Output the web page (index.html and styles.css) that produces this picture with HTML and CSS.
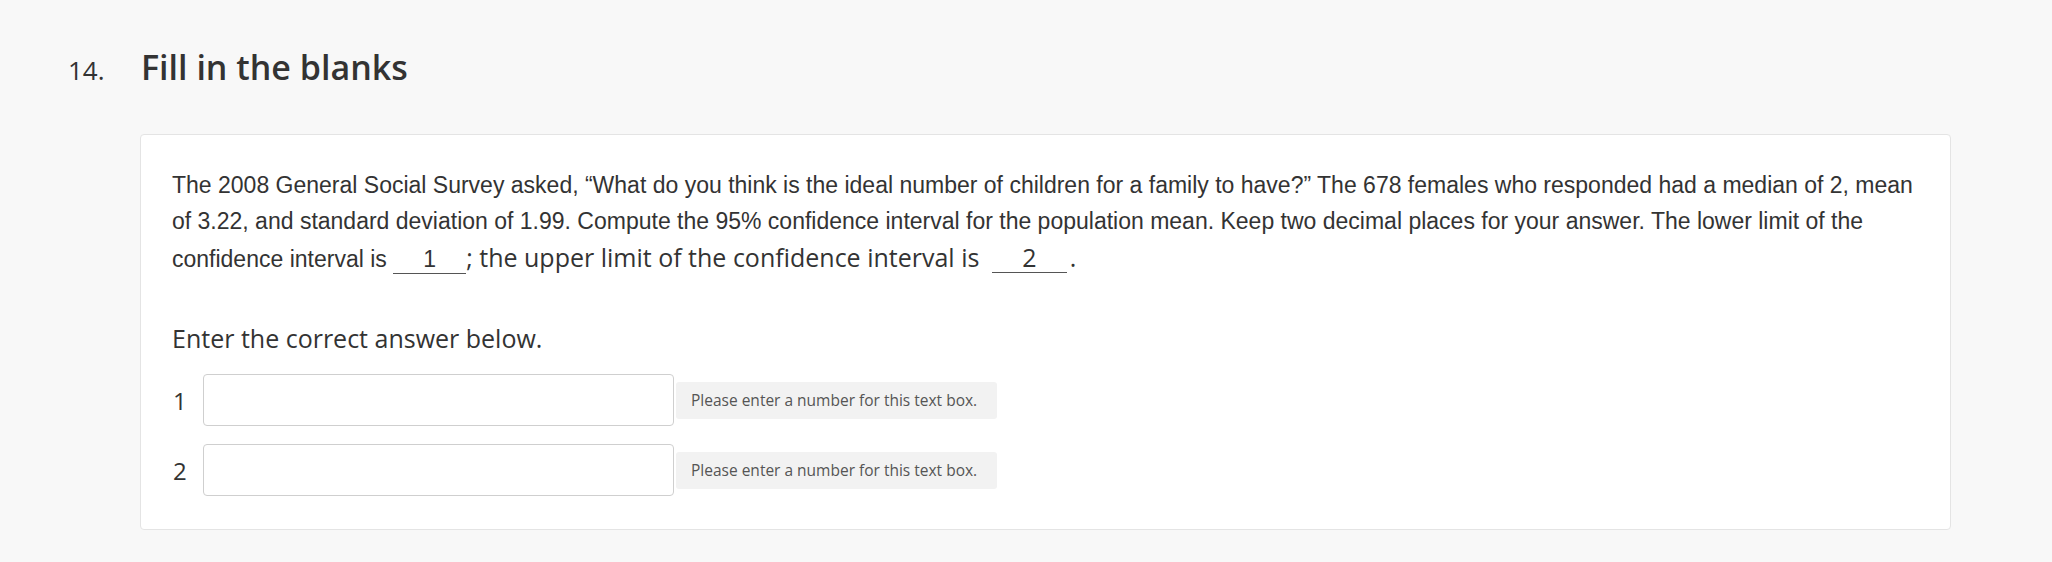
FILE: index.html
```html
<!DOCTYPE html>
<html lang="en">
<head>
<meta charset="utf-8">
<title>Fill in the blanks</title>
<link rel="stylesheet" href="styles.css">
</head>
<body>
<div class="page">
  <div class="q-header">
    <span class="q-num">14.</span>
    <h1 class="q-title">Fill in the blanks</h1>
  </div>
  <div class="card">
    <p class="stem">The 2008 General Social Survey asked, “What do you think is the ideal number of children for a family to have?” The 678 females who responded had a median of 2, mean of 3.22, and standard deviation of 1.99. Compute the 95% confidence interval for the population mean. Keep two decimal places for your answer. The lower limit of the confidence interval is <span class="blank">1</span><span class="os">; the upper limit of the confidence interval is <span class="blank blank-os">2</span>.</span></p>
    <p class="prompt">Enter the correct answer below.</p>
    <div class="answers">
      <div class="answer-row">
        <span class="ans-label">1</span>
        <input class="ans-input" type="text">
        <span class="hint">Please enter a number for this text box.</span>
      </div>
      <div class="answer-row">
        <span class="ans-label">2</span>
        <input class="ans-input" type="text">
        <span class="hint">Please enter a number for this text box.</span>
      </div>
    </div>
  </div>
</div>
</body>
</html>
```
FILE: styles.css
```css
html, body {
  margin: 0;
  padding: 0;
  background: #f8f8f8;
}
body {
  font-family: "Open Sans", "Liberation Sans", sans-serif;
  color: #333;
}
.page {
  padding: 47px 0 0 68px;
}
.q-header {
  display: flex;
  align-items: baseline;
  height: 41px;
}
.q-num {
  font-size: 26px;
  line-height: 41px;
  color: #333;
  width: 73px;
}
.q-title {
  margin: 0;
  font-size: 34px;
  line-height: 41px;
  font-weight: 600;
  color: #333;
}
.card {
  margin: 46px 0 0 72px;
  width: 1747px;
  padding: 32px 31px 33px 31px;
  background: #fff;
  border: 1px solid #e4e4e4;
  border-radius: 4px;
}
.stem {
  margin: 0;
  font-family: "Liberation Sans", Arial, sans-serif;
  font-size: 23px;
  line-height: 36px;
  color: #333;
}
.os {
  font-family: "Open Sans", sans-serif;
  font-size: 25px;
}
.blank {
  display: inline-block;
  width: 73px;
  text-align: center;
  line-height: 23px;
  padding-bottom: 2px;
  border-bottom: 1px solid #555;
  margin: 0;
}
.blank-os {
  width: 75px;
  line-height: 25px;
  margin: 0 3px 0 6px;
}
.prompt {
  margin: 44px 0 0 0;
  font-size: 25px;
  line-height: 34px;
  color: #333;
}
.answers {
  margin-top: 19px;
  display: flex;
  flex-direction: column;
  gap: 18px;
}
.answer-row {
  display: flex;
  align-items: center;
}
.ans-label {
  width: 30px;
  font-size: 24px;
  color: #333;
  padding-left: 1px;
}
.ans-input {
  box-sizing: border-box;
  width: 471px;
  height: 52px;
  margin: 0;
  border: 1px solid #cfcfcf;
  border-radius: 4px;
  background: #fff;
  outline: none;
}
.hint {
  margin-left: 2px;
  display: flex;
  align-items: center;
  box-sizing: border-box;
  width: 321px;
  height: 37px;
  padding: 0 15px;
  background: #f2f2f2;
  border-radius: 3px;
  font-size: 15.5px;
  color: #555;
  white-space: nowrap;
}
```
